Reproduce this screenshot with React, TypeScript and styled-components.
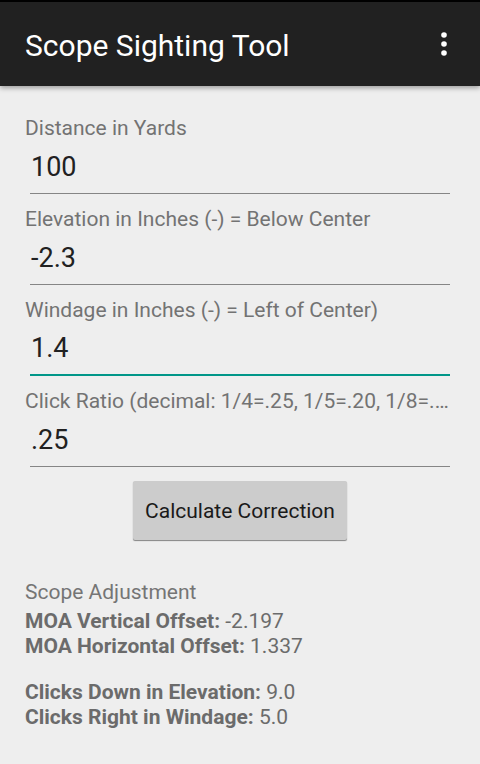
import styled, { createGlobalStyle } from 'styled-components'

const GlobalStyle = createGlobalStyle`
  html, body {
    margin: 0;
    padding: 0;
    background: #eeeeee;
  }
  body {
    font-family: Roboto, 'Liberation Sans', sans-serif;
  }
`

type FieldData = {
  label: string
  value: string
  focused?: boolean
}

const fields: FieldData[] = [
  { label: 'Distance in Yards', value: '100' },
  { label: 'Elevation in Inches (-) = Below Center', value: '-2.3' },
  { label: 'Windage in Inches (-) = Left of Center)', value: '1.4', focused: true },
  { label: 'Click Ratio (decimal: 1/4=.25, 1/5=.20, 1/8=.125)', value: '.25' }
]

const OverflowIcon = () => (
  <svg width='36' height='36' viewBox='0 0 36 36' fill='#ffffff'>
    <circle cx='18' cy='9' r='2.8' />
    <circle cx='18' cy='18' r='2.8' />
    <circle cx='18' cy='27' r='2.8' />
  </svg>
)

export default function App() {
  return (
    <>
      <GlobalStyle />
      <Page>
        <ActionBar>
          <Title>Scope Sighting Tool</Title>
          <MenuButton aria-label='More options'>
            <OverflowIcon />
          </MenuButton>
        </ActionBar>
        <Content>
          {fields.map((f) => (
            <Field key={f.label}>
              <Label>{f.label}</Label>
              <Input defaultValue={f.value} focused={!!f.focused} />
            </Field>
          ))}
          <ButtonRow>
            <Button>Calculate Correction</Button>
          </ButtonRow>
          <Results>
            <Heading>Scope Adjustment</Heading>
            <ResultGroup>
              <Line>
                <b>MOA Vertical Offset:</b> -2.197
              </Line>
              <Line>
                <b>MOA Horizontal Offset:</b> 1.337
              </Line>
            </ResultGroup>
            <ResultGroup spaced>
              <Line>
                <b>Clicks Down in Elevation:</b> 9.0
              </Line>
              <Line>
                <b>Clicks Right in Windage:</b> 5.0
              </Line>
            </ResultGroup>
          </Results>
        </Content>
      </Page>
    </>
  )
}

const Page = styled.div`
  width: 480px;
  height: 764px;
  overflow: hidden;
  background: #eeeeee;
`

const ActionBar = styled.header`
  position: relative;
  z-index: 1;
  height: 84px;
  border-top: 2px solid #000000;
  background: #212121;
  box-shadow: 0 2px 5px rgba(0, 0, 0, 0.35);
  display: flex;
  align-items: center;
  justify-content: space-between;
  padding: 0 18px 0 25px;
`

const Title = styled.h1`
  margin: 0;
  padding-top: 2px;
  color: #ffffff;
  font-size: 30px;
  font-weight: 400;
`

const MenuButton = styled.button`
  border: none;
  background: none;
  padding: 0;
  width: 36px;
  height: 36px;
  display: flex;
`

const Content = styled.main`
  padding: 17px 25px 0;
`

const Field = styled.div`
  margin-top: 13px;
  display: flex;
  flex-direction: column;
`

const Label = styled.label`
  font-size: 21px;
  line-height: 24px;
  color: #737373;
  white-space: nowrap;
  overflow: hidden;
  text-overflow: ellipsis;
`

const Input = styled.input<{ focused: boolean }>`
  box-sizing: border-box;
  margin: 0 5px;
  width: 420px;
  height: 54px;
  padding: 0 0 0 1px;
  border: none;
  border-bottom: ${({ focused }) => (focused ? '2px solid #009688' : '1px solid #858585')};
  background: transparent;
  font-family: Roboto, 'Liberation Sans', sans-serif;
  font-size: 27px;
  color: #212121;
  outline: none;
`

const ButtonRow = styled.div`
  display: flex;
  justify-content: center;
  margin-top: 14px;
`

const Button = styled.button`
  height: 59px;
  padding: 0 12px;
  border: none;
  border-radius: 2px;
  background: #cccccc;
  box-shadow: 0 1px 1px rgba(0, 0, 0, 0.45);
  font-family: Roboto, 'Liberation Sans', sans-serif;
  font-size: 21px;
  color: #1a1a1a;
`

const Results = styled.section`
  margin-top: 40px;
  font-size: 21px;
`

const Heading = styled.div`
  color: #757575;
  margin-bottom: 5px;
`

const ResultGroup = styled.div<{ spaced?: boolean }>`
  margin-top: ${({ spaced }) => (spaced ? '22px' : '0')};
  color: #6b6b6b;
`

const Line = styled.div`
  line-height: 24.5px;

  b {
    font-weight: 700;
  }
`
